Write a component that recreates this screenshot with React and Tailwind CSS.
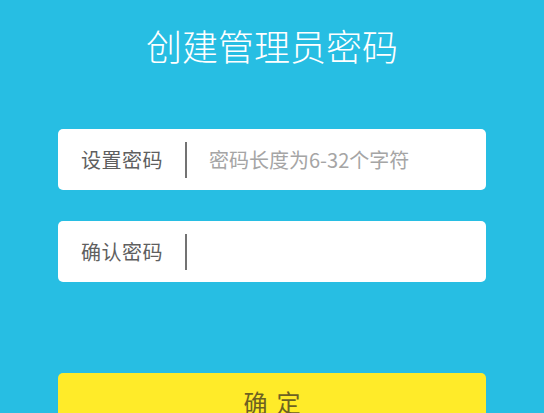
import React from "react";

const font = { fontFamily: '"Noto Sans CJK SC", "Noto Sans", sans-serif' };

function Field({ label, placeholder }) {
  return (
    <div className="flex items-center h-[61px] bg-white rounded-[5px] pl-[23px]">
      <span className="text-[20px] leading-none text-[#5f5f5f] w-[82px] tracking-[0.5px]">{label}</span>
      <span className="ml-[22px] w-[2px] h-[36px] bg-[#737373]" />
      {placeholder ? (
        <span className="ml-[22px] text-[20px] leading-none text-[#a5a5a5]">{placeholder}</span>
      ) : null}
    </div>
  );
}

export default function App() {
  return (
    <div className="w-[544px] h-[413px] overflow-hidden bg-[#27bee3] flex flex-col" style={font}>
      <h1 className="mt-[25px] text-center text-white text-[36px] leading-[40px] font-light">
        创建管理员密码
      </h1>
      <div className="mx-[58px] mt-[64px] flex flex-col gap-[31px]">
        <Field label="设置密码" placeholder="密码长度为6-32个字符" />
        <Field label="确认密码" />
      </div>
      <div className="mx-[58px] mt-[91px] h-[60px] bg-[#ffeb29] rounded-[5px] flex justify-center gap-[9px] pt-[17px] shrink-0">
        <span className="text-[24px] leading-none text-[#6d6122]">确</span>
        <span className="text-[24px] leading-none text-[#6d6122]">定</span>
      </div>
    </div>
  );
}
